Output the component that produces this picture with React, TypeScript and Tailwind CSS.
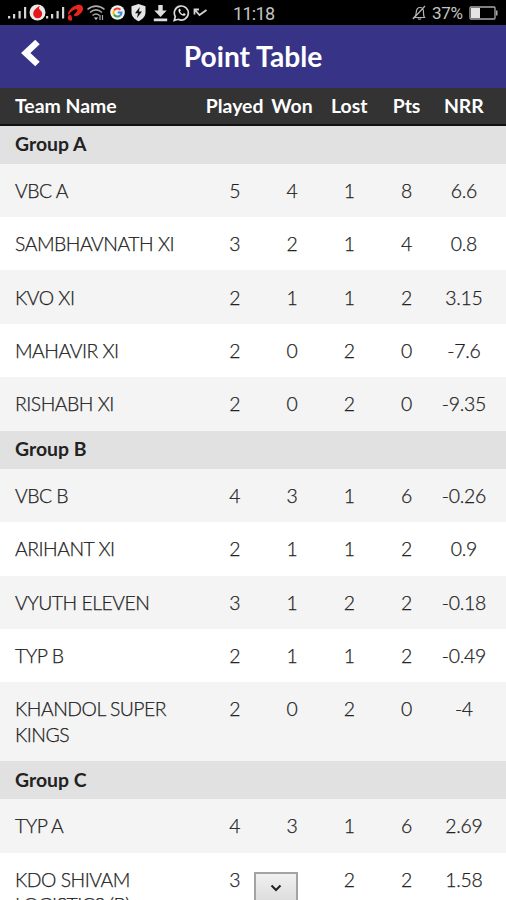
import React from "react";

type Team = {
  name: string;
  played: number;
  won: number;
  lost: number;
  pts: number;
  nrr: string;
};

const groups: { title: string; teams: Team[] }[] = [
  {
    title: "Group A",
    teams: [
      { name: "VBC A", played: 5, won: 4, lost: 1, pts: 8, nrr: "6.6" },
      { name: "SAMBHAVNATH XI", played: 3, won: 2, lost: 1, pts: 4, nrr: "0.8" },
      { name: "KVO XI", played: 2, won: 1, lost: 1, pts: 2, nrr: "3.15" },
      { name: "MAHAVIR XI", played: 2, won: 0, lost: 2, pts: 0, nrr: "-7.6" },
      { name: "RISHABH XI", played: 2, won: 0, lost: 2, pts: 0, nrr: "-9.35" },
    ],
  },
  {
    title: "Group B",
    teams: [
      { name: "VBC B", played: 4, won: 3, lost: 1, pts: 6, nrr: "-0.26" },
      { name: "ARIHANT XI", played: 2, won: 1, lost: 1, pts: 2, nrr: "0.9" },
      { name: "VYUTH ELEVEN", played: 3, won: 1, lost: 2, pts: 2, nrr: "-0.18" },
      { name: "TYP B", played: 2, won: 1, lost: 1, pts: 2, nrr: "-0.49" },
      { name: "KHANDOL SUPER KINGS", played: 2, won: 0, lost: 2, pts: 0, nrr: "-4" },
    ],
  },
  {
    title: "Group C",
    teams: [
      { name: "TYP A", played: 4, won: 3, lost: 1, pts: 6, nrr: "2.69" },
      { name: "KDO SHIVAM LOGISTICS (B)", played: 3, won: 1, lost: 2, pts: 2, nrr: "1.58" },
    ],
  },
];

const columns = ["Played", "Won", "Lost", "Pts", "NRR"];

const rowGrid = "grid grid-cols-[191px_repeat(5,57.3px)] pl-[15px]";

function SignalIcon() {
  return (
    <svg className="h-[13px] w-[20px]" viewBox="0 0 20 13" fill="#d4d4d4">
      <rect x="0" y="10" width="2.2" height="2.5" />
      <rect x="5" y="8" width="2.2" height="4.5" />
      <rect x="10.5" y="5" width="2.2" height="7.5" />
      <rect x="16" y="1" width="2.2" height="11.5" />
    </svg>
  );
}

function StatusBar() {
  return (
    <div className="relative flex h-[25px] items-center bg-black text-[#c4c4c4]">
      <div className="flex h-full items-center pl-[8px]">
        <SignalIcon />
        {/* Vodafone */}
        <svg className="h-[17px] w-[18px]" viewBox="0 0 18 17">
          <circle cx="9.5" cy="8.5" r="8" fill="#eee9e9" />
          <path d="M12.5 1.5C9 3 5.2 6.5 5.2 9.700a4.500 4.500 0 0 0 9 0C14.200 7 11.500 6 11 4.500c-.2-1 .5-2 1.500-3z" fill="#e3161c" />
        </svg>
        <SignalIcon />
        {/* Airtel */}
        <svg className="h-[19px] w-[18px]" viewBox="0 0 18 19" fill="#e8261c">
          <path d="M2 10.500C4 4.500 10.500.8 14.500 2c4 1.500 3 6-.5 9-2.500 2.200-5.500 3-6 1.500-.3-1.500 2-2.500 3-4C12 6.500 10.500 6 9 6.500c-2 .6-5 3-5.500 4.500-.7 1-2 .7-1.500-.5z" />
          <path d="M2.500 12.500c1.200-.8 3-.3 3.200 1.200.1 1.300.8 2.500 0 3.500-1 1-3 .5-3.700-1.200-.4-1.300-.2-2.800.5-3.500z" />
        </svg>
        {/* Wifi */}
        <svg className="ml-[2px] h-[17px] w-[20px]" viewBox="0 0 20 17" fill="none" stroke="#aaa" strokeWidth="1.6">
          <path d="M1.500 5.500c5-4.500 12-4.500 17 0M4 8.500c3.800-3.300 8.200-3.300 12 0M6.500 11.500c2.200-1.900 4.800-1.900 7 0" />
          <path d="M7.800 13.500h4.400L10 16z" fill="#ccc" stroke="none" />
          <path d="M14 11v5M16.500 11v5" strokeWidth="1.2" />
        </svg>
        {/* Google */}
        <svg className="ml-[4px] h-[15px] w-[15px]" viewBox="0 0 15 15" fill="none" strokeWidth="2">
          <circle cx="7.5" cy="7.5" r="7.3" fill="#f2f2f2" />
          <path d="M10.400 4.800A4 4 0 0 0 4 5.500" stroke="#ea4335" />
          <path d="M4 5.500a4 4 0 0 0 0 4" stroke="#fbbc05" />
          <path d="M4 9.500a4 4 0 0 0 6.200 1" stroke="#34a853" />
          <path d="M10.200 10.500a4 4 0 0 0 1.300-3H7.800" stroke="#4285f4" />
        </svg>
        {/* Shield */}
        <svg className="ml-[5px] h-[19px] w-[17px]" viewBox="0 0 17 19">
          <path d="M8.500 1 15.500 3.300v6c0 4.200-3 7-7 9-4-2-7-4.800-7-9v-6z" fill="#e5e5e5" />
          <path d="M9.800 4 5 10.200h3L7 15l5-6.500H8.900z" fill="#111" />
        </svg>
        {/* Download */}
        <svg className="ml-[6px] h-[18px] w-[15px]" viewBox="0 0 15 18" fill="#dedede">
          <path d="M5.300 1h4.400v5.500h4L7.500 13 1.300 6.500h4zM.8 14.500h13.400v2.700H.8z" />
        </svg>
        {/* WhatsApp */}
        <svg className="ml-[5px] h-[18px] w-[17px]" viewBox="0 0 17 18" fill="none" stroke="#d8d8d8">
          <path d="M1.200 16.500 2.300 12.600A7 7 0 1 1 5.200 15.300z" strokeWidth="1.7" />
          <path d="M5.800 5.200c-1.500 2 2 6.800 5.400 6.500 1-.1 1.600-1 1.400-1.600L10.800 9l-1 1.200C8.400 9.600 7.500 8.600 7 7.500l.9-1L7 4.800c-.4-.2-.8-.1-1.200.4z" fill="#e8e8e8" stroke="none" />
        </svg>
        {/* Missed call */}
        <svg className="ml-[3px] h-[12px] w-[15px]" viewBox="0 0 15 12" fill="none" stroke="#d4d4d4" strokeWidth="1.8">
          <path d="M1.500 7.500V2.500h4.500M2 3l4.500 5L13.500 3" />
        </svg>
      </div>
      <span className="absolute left-[233px] top-[3px] font-['Roboto'] text-[18px] font-normal leading-[21px] tracking-[-0.7px]">11:18</span>
      <div className="ml-auto flex items-center pr-[7px] font-normal">
        <svg className="h-[15px] w-[15px]" viewBox="0 0 15 15" fill="none" stroke="#b4b4b4" strokeWidth="1.2">
          <path d="M2 12.500h10.500c-1.200-1.500-1-3.500-1-5.500 0-3-1.500-4.500-3.500-4.500S4.500 4 4.300 7c0 2-.3 4-2.300 5.500zM6 13.500c.5 1 2.500 1 3 0M13 1 1 14" />
        </svg>
        <span className="ml-[5px] w-[33px] font-['Roboto'] text-[17px] leading-[20px] tracking-[-0.3px]">37%</span>
        <svg className="ml-[4px] h-[14px] w-[30px]" viewBox="0 0 30 14">
          <rect x="1" y="1" width="25" height="12" rx="1" fill="none" stroke="#aaa" strokeWidth="1.3" />
          <rect x="2" y="2" width="9" height="10" fill="#e4e4e4" />
          <path d="M27 4.500h1.500v5H27z" fill="#aaa" />
        </svg>
      </div>
    </div>
  );
}

function Header() {
  return (
    <header className="relative flex h-[63px] items-center justify-center bg-[#373387] text-white">
      <button type="button" aria-label="Back" className="absolute left-[21px] top-[13px]">
        <svg className="h-[30px] w-[20px]" viewBox="0 0 20 30" fill="none" stroke="currentColor" strokeWidth="6.5">
          <path d="M16.500 4 4.800 15l11.700 11" />
        </svg>
      </button>
      <h1 className="pb-px text-[28.2px] font-bold leading-[34px]">Point Table</h1>
    </header>
  );
}

function TeamRow({ team, striped }: { team: Team; striped: boolean }) {
  return (
    <div
      className={`${rowGrid} py-[14.1px] leading-[25.2px] tracking-[-0.25px] [-webkit-text-stroke:0.25px_#222] ${
        striped ? "bg-[#f4f4f4]" : "bg-white"
      }`}
    >
      <div className="pr-[20px] tracking-[-0.5px]">{team.name}</div>
      <div className="text-center">{team.played}</div>
      <div className="text-center">{team.won}</div>
      <div className="text-center">{team.lost}</div>
      <div className="text-center">{team.pts}</div>
      <div className="text-center">{team.nrr}</div>
    </div>
  );
}

function App() {
  return (
    <div className="relative h-[900px] w-[506px] overflow-hidden bg-white font-['Lato',sans-serif] text-[19.4px] font-light text-[#222]">
      <StatusBar />
      <Header />
      <div className={`${rowGrid} h-[37.5px] items-center border-b-2 border-[#111] bg-[#333] font-bold text-white`}>
        <div>Team Name</div>
        {columns.map((column) => (
          <div key={column} className="flex justify-center">
            {column}
          </div>
        ))}
      </div>

      {groups.map((group) => (
        <section key={group.title}>
          <h2 className="flex h-[38.2px] items-center bg-[#e1e1e1] pb-[2px] pl-[15px] font-bold">{group.title}</h2>
          {group.teams.map((team, index) => (
            <TeamRow key={team.name} team={team} striped={index % 2 === 0} />
          ))}
        </section>
      ))}

      {/* Scroll down button, cut off by the bottom edge */}
      <button
        type="button"
        aria-label="Scroll down"
        className="absolute left-[254px] top-[872px] flex h-[32px] w-[44px] justify-center border-2 border-[#a3a3a3] bg-gradient-to-b from-[#f0f0f0] to-[#dcdcdc] pt-[10px]"
      >
        <svg className="h-[8px] w-[12px]" viewBox="0 0 12 8" fill="none" stroke="#222" strokeWidth="2">
          <path d="M1.500 1.500 6 6l4.500-4.500" />
        </svg>
      </button>
    </div>
  );
}

export default App;
